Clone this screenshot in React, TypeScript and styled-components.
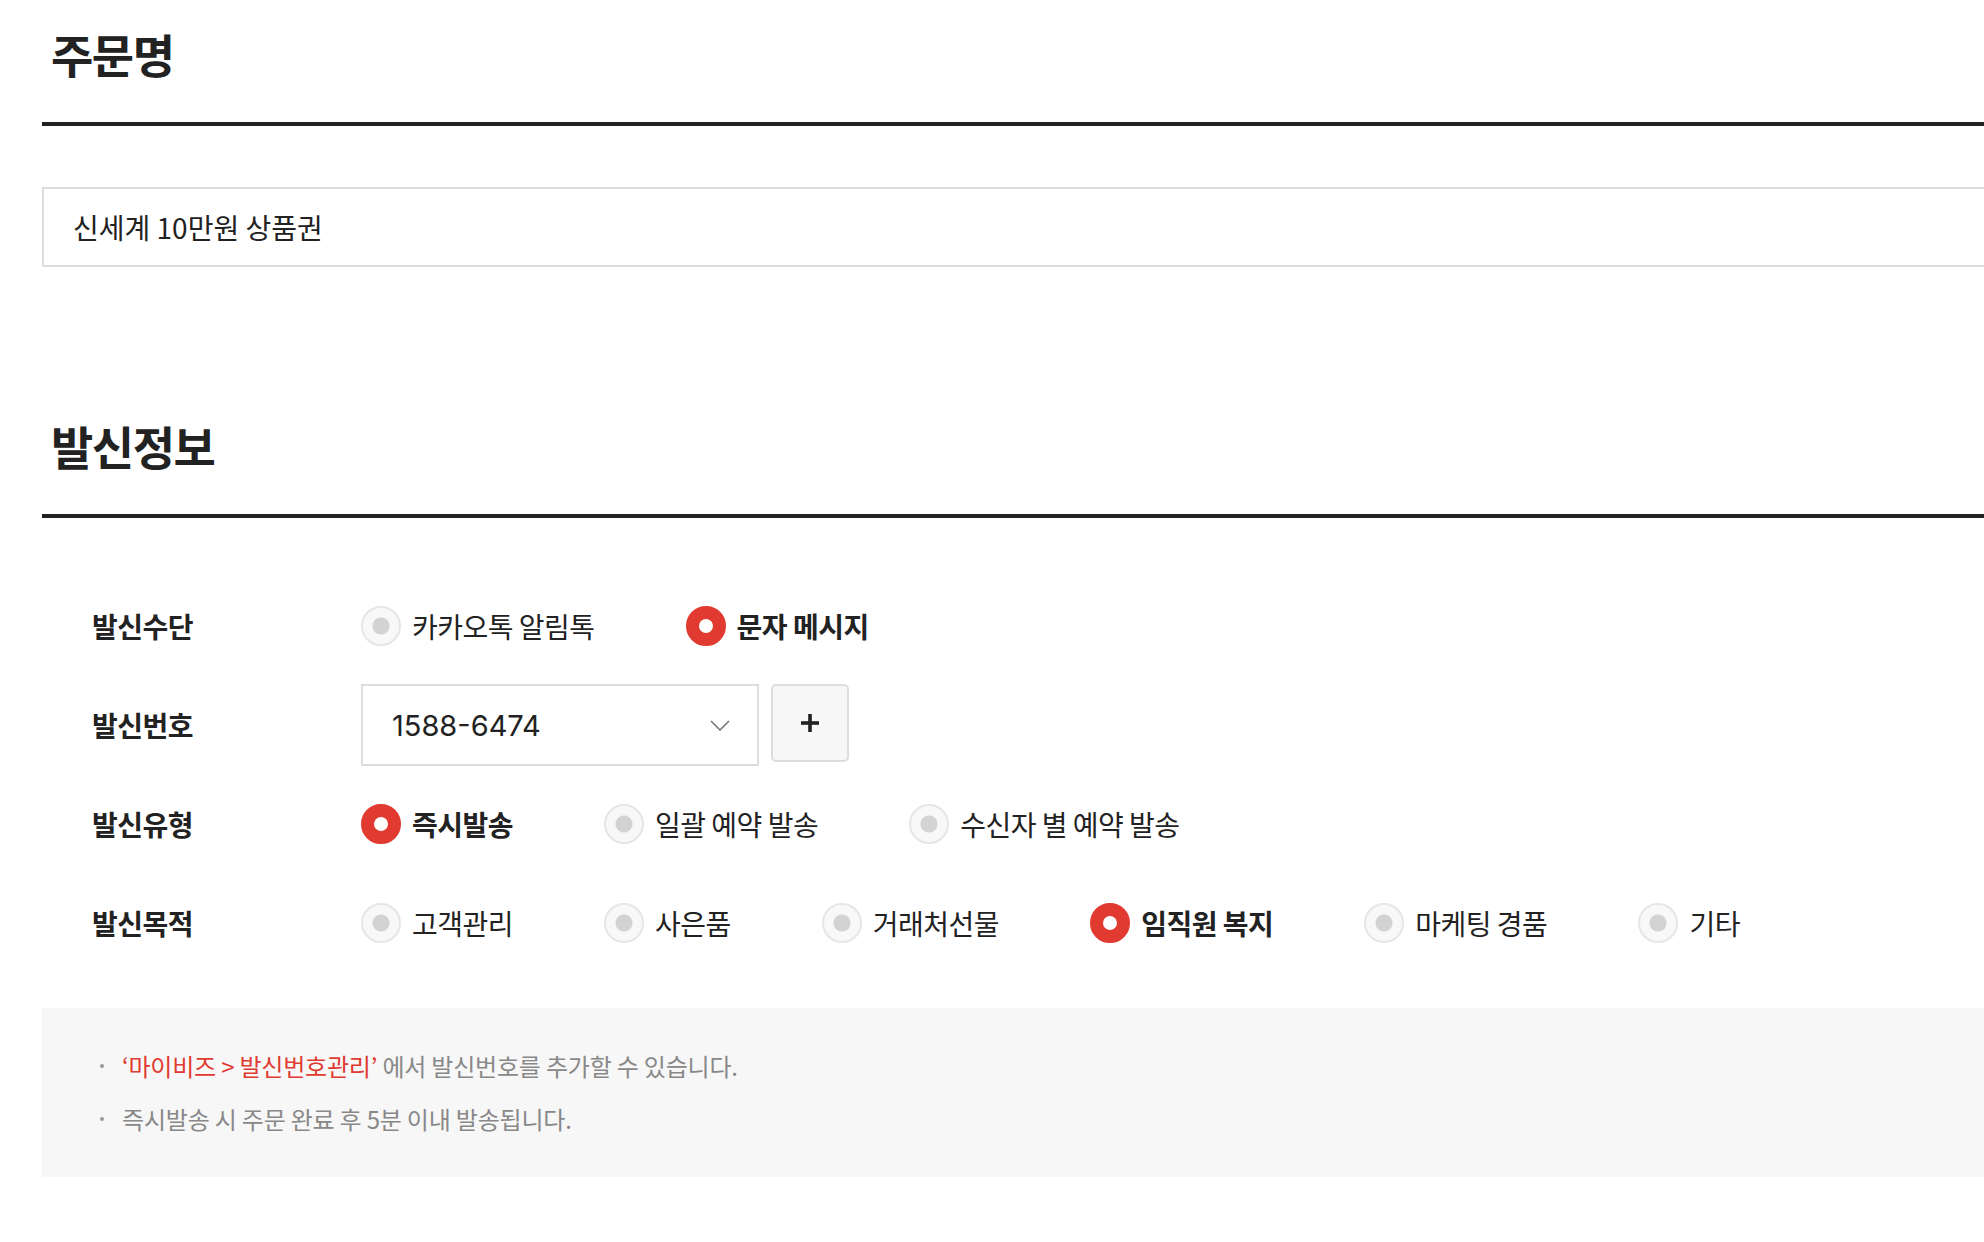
import styled, { createGlobalStyle } from "styled-components";

type Option = {
  label: string;
  checked?: boolean;
};

const sendMethods: Option[] = [
  { label: "카카오톡 알림톡" },
  { label: "문자 메시지", checked: true },
];

const sendTypes: Option[] = [
  { label: "즉시발송", checked: true },
  { label: "일괄 예약 발송" },
  { label: "수신자 별 예약 발송" },
];

const sendPurposes: Option[] = [
  { label: "고객관리" },
  { label: "사은품" },
  { label: "거래처선물" },
  { label: "임직원 복지", checked: true },
  { label: "마케팅 경품" },
  { label: "기타" },
];

function RadioGroup({ options }: { options: Option[] }) {
  return (
    <StyledRadioGroup>
      {options.map((el, idx) => (
        <StyledOption key={idx}>
          <StyledRadio $checked={!!el.checked} />
          <StyledOptionText $checked={!!el.checked}>{el.label}</StyledOptionText>
        </StyledOption>
      ))}
    </StyledRadioGroup>
  );
}

export default function App() {
  return (
    <>
      <GlobalStyle />
      <StyledPage>
        <StyledSectionHead>
          <h2>주문명</h2>
        </StyledSectionHead>
        <StyledTextInput readOnly value="신세계 10만원 상품권" />

        <StyledSectionHead $top={125}>
          <h2>발신정보</h2>
        </StyledSectionHead>

        <StyledRows>
          <StyledRow>
            <StyledLabel>발신수단</StyledLabel>
            <RadioGroup options={sendMethods} />
          </StyledRow>
          <StyledRow>
            <StyledLabel>발신번호</StyledLabel>
            <StyledSelect>
              <span>1588-6474</span>
              <svg width="20" height="11" viewBox="0 0 20 11">
                <polyline points="1,1 10,10 19,1" fill="none" stroke="#777" strokeWidth="1.6" />
              </svg>
            </StyledSelect>
            <StyledAddButton type="button">
              <svg width="20" height="20" viewBox="0 0 20 20">
                <rect x="8.2" y="1" width="3.6" height="18" fill="#222" />
                <rect x="1" y="8.2" width="18" height="3.6" fill="#222" />
              </svg>
            </StyledAddButton>
          </StyledRow>
          <StyledRow>
            <StyledLabel>발신유형</StyledLabel>
            <RadioGroup options={sendTypes} />
          </StyledRow>
          <StyledRow>
            <StyledLabel>발신목적</StyledLabel>
            <RadioGroup options={sendPurposes} />
          </StyledRow>
        </StyledRows>

        <StyledNotice>
          <li>
            <i />
            <span>
              <em>‘마이비즈 &gt; 발신번호관리’</em> 에서 발신번호를 추가할 수 있습니다.
            </span>
          </li>
          <li>
            <i />
            <span>즉시발송 시 주문 완료 후 5분 이내 발송됩니다.</span>
          </li>
        </StyledNotice>
      </StyledPage>
    </>
  );
}

const GlobalStyle = createGlobalStyle`
  html, body {
    margin: 0;
    padding: 0;
    background: #fff;
    overflow: hidden;
  }
  body {
    font-family: "Noto Sans CJK KR", "Noto Sans", sans-serif;
    color: #222;
  }
  * {
    box-sizing: border-box;
  }
`;

const StyledPage = styled.div`
  margin: 0 -40px 0 42px;
`;

const StyledSectionHead = styled.div<{ $top?: number }>`
  margin-top: ${props => props.$top ?? 0}px;
  padding: 30px 0 46px 9px;
  border-bottom: 4px solid #222;
  h2 {
    margin: 0;
    font-size: 46px;
    line-height: 46px;
    font-weight: 700;
    letter-spacing: -1.5px;
    color: #222;
  }
`;

const StyledTextInput = styled.input`
  display: block;
  width: 100%;
  height: 80px;
  margin-top: 61px;
  padding: 0 29px;
  border: 2px solid #ddd;
  outline: none;
  font-family: "Noto Sans CJK KR", sans-serif;
  font-size: 28px;
  letter-spacing: 0;
  color: #222;
  background: #fff;
`;

const StyledRows = styled.div`
  display: flex;
  flex-direction: column;
  gap: 17px;
  padding-top: 67px;
`;

const StyledRow = styled.div`
  display: flex;
  align-items: center;
  min-height: 82px;
  padding-left: 50px;
`;

const StyledLabel = styled.div`
  width: 269px;
  flex-shrink: 0;
  font-size: 28px;
  font-weight: 700;
  letter-spacing: -0.5px;
  color: #222;
`;

const StyledRadioGroup = styled.div`
  display: flex;
  align-items: center;
  column-gap: 91px;
`;

const StyledOption = styled.label`
  display: flex;
  align-items: center;
  gap: 11px;
  cursor: pointer;
`;

const StyledRadio = styled.span<{ $checked: boolean }>`
  width: 40px;
  height: 40px;
  flex-shrink: 0;
  border-radius: 50%;
  border: ${props => props.$checked ? '13px solid #e03a31' : '2px solid #e6e6e6'};
  background: ${props => props.$checked
    ? '#fff'
    : 'radial-gradient(circle, #d3d3d3 0 8px, #f8f8f8 9px)'};
`;

const StyledOptionText = styled.span<{ $checked: boolean }>`
  font-size: 28px;
  font-weight: ${props => props.$checked ? 700 : 400};
  letter-spacing: -0.5px;
  color: #222;
`;

const StyledSelect = styled.div`
  display: flex;
  align-items: center;
  justify-content: space-between;
  align-self: flex-start;
  width: 398px;
  height: 82px;
  padding: 0 27px 0 29px;
  border: 2px solid #ddd;
  background: #fff;
  span {
    font-family: Inter, "Liberation Sans", sans-serif;
    font-size: 29px;
    color: #222;
  }
`;

const StyledAddButton = styled.button`
  display: flex;
  align-items: center;
  justify-content: center;
  align-self: flex-start;
  width: 78px;
  height: 78px;
  margin-left: 12px;
  padding: 0;
  border: 2px solid #ddd;
  border-radius: 5px;
  background: #f7f7f7;
`;

const StyledNotice = styled.ul`
  margin: 44px 0 0;
  padding: 40px 0 40px 58px;
  list-style: none;
  background: #f7f7f7;
  li {
    display: flex;
    align-items: center;
    line-height: 36px;
    font-size: 24px;
    letter-spacing: -0.2px;
    color: #888;
    & + li {
      margin-top: 17px;
    }
  }
  i {
    width: 4px;
    height: 4px;
    margin-right: 18px;
    border-radius: 50%;
    background: #999;
    flex-shrink: 0;
  }
  em {
    font-style: normal;
    color: #e03a31;
  }
`;
